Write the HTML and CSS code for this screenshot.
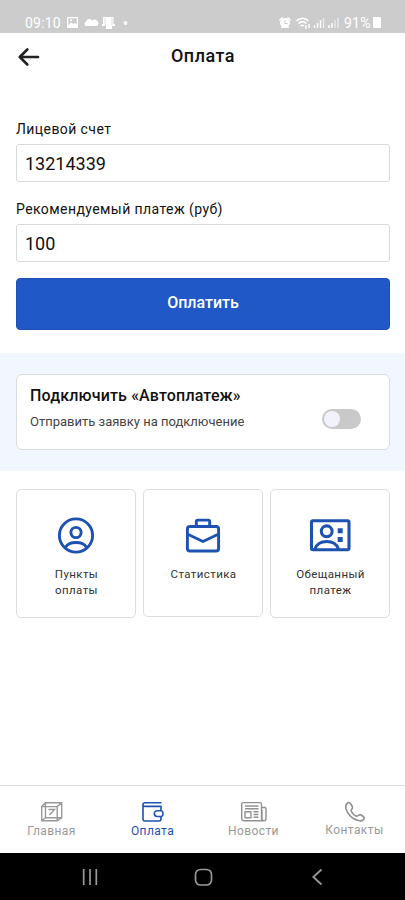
FILE: index.html
```html
<!DOCTYPE html>
<html lang="ru">
<head>
<meta charset="utf-8">
<meta name="viewport" content="width=device-width, initial-scale=1">
<title>Оплата</title>
<link rel="stylesheet" href="styles.css">
</head>
<body>
<div class="app">
  <div class="status">
    <span class="time">09:10</span>
    <svg class="status-left" width="64" height="16" viewBox="0 0 64 16" fill="#fff">
      <path fill-rule="evenodd" d="M2 2h9q1 0 1 1v9q0 1-1 1H2q-1 0-1-1V3q0-1 1-1zM2.300 3.300v7l3-3 2 2 1.500-1.500 2 2V3.300zM4 4.500h2v1.500H4z"/>
      <path d="M20 11a2.500 2.500 0 0 1 0-4.600 3.500 3.500 0 0 1 6.300-.8A3.200 3.200 0 0 1 31 11z"/>
      <path d="M37 2h10.500v8H46v4h-6v-4h-3zM36 9h3v2h-3zM46 9h3v2h-3z"/>
      <path d="M39 3v7M46 3v7" stroke="#ccc" stroke-width=".7"/>
      <circle cx="59.500" cy="8" r="1.900"/>
    </svg>
    <svg class="status-right" width="64" height="16" viewBox="0 0 64 16" fill="none" stroke="#fff">
      <circle cx="7" cy="8" r="4.500" fill="#fff"/>
      <path d="M1.500 5.500l3-3M12.500 5.500l-3-3M3.500 13l1-1.500M10.500 13l-1-1.500" stroke-width="1.600"/>
      <path d="M7 5v3.500h2.500" stroke="#ccc"/>
      <path d="M18.500 6q6-5.500 12 0M20.500 8.500q4-3.700 8 0M22.500 11q2-1.500 3.500 0" stroke-width="1.500"/>
      <path d="M28 10v4M31 9v4" stroke-width="1.400"/>
      <path d="M36.500 13v-3M39.500 13V8M42.500 13V5M51 13v-3M54 13V8" stroke-width="1.400"/>
      <path d="M45.500 13V3M57 13V5M60 13V3" stroke-width="1.200" opacity=".65"/>
    </svg>
    <span class="percent">91%</span>
    <span class="battery"></span>
  </div>

  <header class="header">
    <svg class="back" width="22" height="18" viewBox="0 0 22 18" fill="none" stroke="#222" stroke-width="2.600" stroke-linecap="round" stroke-linejoin="round"><path d="M20 9H2M9.300 1.500L1.800 9l7.500 7.500"/></svg>
    <h1 class="title">Оплата</h1>
  </header>

  <main class="main">
    <section class="form">
      <div class="label label-account">Лицевой счет</div>
      <div class="field">13214339</div>
      <div class="label label-sum">Рекомендуемый платеж (руб)</div>
      <div class="field">100</div>
      <div class="pay">Оплатить</div>
    </section>

    <section class="auto">
      <div class="auto-card">
        <div>
          <div class="auto-title">Подключить «Автоплатеж»</div>
          <div class="auto-text">Отправить заявку на подключение</div>
        </div>
        <div class="switch"><span class="knob"></span></div>
      </div>
    </section>

    <section class="tiles">
      <div class="tile">
        <svg width="42" height="38" viewBox="0 0 42 38" fill="none" stroke="#1d52b0" stroke-width="2.900"><circle cx="21" cy="19.500" r="16.600"/><circle cx="21" cy="16.500" r="5.100"/><path d="M10.500 31.500q2.500-5 10.500-5t10.500 5"/></svg>
        <div class="tile-text">Пункты<br>оплаты</div>
      </div>
      <div class="tile tile-middle">
        <svg width="42" height="38" viewBox="0 0 42 38" fill="none" stroke="#1d52b0" stroke-width="2.900" stroke-linejoin="round"><rect x="5.400" y="10.500" width="31.200" height="24.500" rx="2.500"/><path d="M14.300 10V5.600q0-1.500 1.500-1.500h10.400q1.500 0 1.500 1.500V10M5.800 18.300L21 25.500l15.200-7.200"/></svg>
        <div class="tile-text">Статистика</div>
      </div>
      <div class="tile">
        <svg width="42" height="38" viewBox="0 0 42 38" fill="none" stroke="#1d52b0" stroke-width="3.100"><rect x="2.500" y="4.800" width="37.500" height="29" rx="1.500"/><circle cx="17.700" cy="15.300" r="5.400"/><path d="M6 33q2.500-7.500 11.700-7.500T29.400 33"/><path d="M28.700 12.200h5v5h-5zM28.700 20.900h5v5h-5z" fill="#1d52b0" stroke="none"/></svg>
        <div class="tile-text">Обещанный<br>платеж</div>
      </div>
    </section>
  </main>

  <nav class="tabs">
    <div class="tab">
      <svg width="26" height="22" viewBox="0 0 26 22" fill="none" stroke="#999" stroke-width="1.400"><path d="M6.500 1.700h16.200v15H6.500zM2.700 5.600h15.500v14.200H2.700zM2.700 5.600l3.800-3.900M18.200 5.600l4.500-3.900M18.200 19.800l4.500-3.100M2.700 19.800l3.800-3.100M9.500 8.500h6l-5 5.500"/></svg>
      <span>Главная</span>
    </div>
    <div class="tab tab-active">
      <svg width="26" height="22" viewBox="0 0 26 22" fill="none" stroke="#1d52b0" stroke-width="1.600" stroke-linejoin="round"><path d="M21.500 1.700H5q-2 0-2 2V18q0 2 2 2h14q2 0 2-2v-2.500M3 4.200q.5 1.200 2 1.200h16v4.100"/><path d="M21.500 9.700h-4.300a2.900 2.900 0 1 0 0 5.800h4.300q1.500-.5 1.500-2.900t-1.500-2.900z"/></svg>
      <span>Оплата</span>
    </div>
    <div class="tab">
      <svg width="28" height="22" viewBox="0 0 28 22" fill="none" stroke="#919191" stroke-width="1.400" stroke-linejoin="round"><path d="M1.700 3q0-1.400 1.400-1.400h17q1.400 0 1.400 1.400v14.500q0 2.200 2.200 2.200H4q-2.300 0-2.300-2.300zM21.500 6.500h3.300q1.200 0 1.200 1.200v9.700q0 2.300-2.300 2.300-1.700 0-1.700-2.200V9M5 5h13.500M5 7.700h13.500M13.500 10.700h5M13.500 13.500h5M13.500 16.300h5M5 10.700h6v6H5z"/></svg>
      <span>Новости</span>
    </div>
    <div class="tab tab-contacts">
      <svg width="26" height="22" viewBox="0 0 26 22" fill="none" stroke="#919191" stroke-width="1.600" stroke-linejoin="round"><path d="M5.200 2.400q1.700-1.700 3.100.1l1.900 2.800q.9 1.500-.3 2.700-1.400 1.100-.5 2.700 1.500 2.800 4.600 4.200 1.400.6 2.500-.6 1.200-1.100 2.700-.3l2 1.500q1.900 1.400.3 3.100-2 1.900-5 1C10.500 18 5.700 13.500 3.900 7.500q-.8-3 1.300-5.100z"/></svg>
      <span>Контакты</span>
    </div>
  </nav>

  <div class="system">
    <svg width="20" height="20" viewBox="0 0 20 20" fill="none" stroke="#999" stroke-width="1.700"><path d="M3.700 2v16M10 2v16M16.300 2v16"/></svg>
    <svg width="20" height="20" viewBox="0 0 20 20" fill="none" stroke="#999" stroke-width="1.700"><rect x="1.500" y="2.500" width="16" height="15.500" rx="5"/></svg>
    <svg width="20" height="20" viewBox="0 0 20 20" fill="none" stroke="#999" stroke-width="1.800"><path d="M14.500 2.500L6.300 10l8.200 7.500"/></svg>
  </div>
</div>
</body>
</html>
```
FILE: styles.css
```css
* { box-sizing: border-box; }

body {
  margin: 0;
  background: #fff;
  color: #111;
  font-family: Roboto, "Liberation Sans", sans-serif;
}

.app {
  height: 900px;
  display: flex;
  flex-direction: column;
  overflow: hidden;
}

.status {
  height: 33px;
  flex: none;
  padding: 13px 24px 0 25px;
  display: flex;
  background: #ccc;
  color: #fff;
  font-size: 14px;
  line-height: 20px;
}
.time { width: 41px; letter-spacing: .2px; }
.status-left { margin-top: 2px; }
.status-right { margin: 2px 2px 0 auto; }
.percent { width: 28px; white-space: nowrap; letter-spacing: .2px; }
.battery { width: 8px; height: 11px; margin: 4px 0 0 1px; background: #fff; border-radius: 1px; }

.header {
  height: 47px;
  flex: none;
  padding: 0 18px;
  display: grid;
  grid-template-columns: 22px 1fr 22px;
  align-items: center;
}
.title {
  margin: 0;
  padding: 0 0 2px 1px;
  font-size: 18px;
  font-weight: 500;
  letter-spacing: .5px;
  text-align: center;
}

.main { flex: 1; }
.form { height: 273px; padding: 39px 15px 0 16px; }
.label { font-size: 14px; line-height: 20px; letter-spacing: .42px; white-space: nowrap; }
.label-account { margin-bottom: 5px; }
.label-sum { margin: 17px 0 5px; }
.field {
  height: 38px;
  padding-left: 8px;
  border: 1px solid #d9d9d9;
  border-radius: 3px;
  font-size: 18px;
  line-height: 37px;
}
.pay {
  height: 52px;
  margin-top: 16px;
  border: 1px solid #1d4fb4;
  border-radius: 4px;
  background: #2158c8;
  color: #fff;
  font-size: 16px;
  font-weight: 500;
  line-height: 48px;
  text-align: center;
}

.auto { height: 118px; padding: 21px 15px 21px 16px; background: #f2f6fe; }
.auto-card {
  height: 76px;
  padding: 10px 28px 0 13px;
  display: flex;
  justify-content: space-between;
  border: 1px solid #d9dcde;
  border-radius: 6px;
  background: #fff;
}
.auto-title { font-size: 16px; font-weight: 500; line-height: 22px; letter-spacing: .16px; white-space: nowrap; }
.auto-text { margin-top: 4px; color: #444; font-size: 13px; line-height: 21px; white-space: nowrap; }
.switch { width: 39px; height: 20px; margin-top: 24px; padding: 2px; border-radius: 10px; background: #c9c9c9; }
.knob { display: block; width: 16px; height: 16px; border-radius: 50%; background: #f2f3fa; }

.tiles {
  padding: 18px 15px 0 16px;
  display: grid;
  grid-template-columns: repeat(3, 1fr);
  gap: 7px;
}
.tile {
  height: 129px;
  padding-top: 26px;
  border: 1px solid #dedede;
  border-radius: 5px;
  text-align: center;
}
.tile-middle { height: 128px; }
.tile svg { display: block; margin: 0 auto; }
.tile-text { margin-top: 12px; padding-left: 1px; color: #333; font-size: 11.500px; line-height: 16px; letter-spacing: .4px; }

.tabs {
  height: 68px;
  flex: none;
  padding: 15px 0 0 1px;
  display: grid;
  grid-template-columns: repeat(4, 1fr);
  border-top: 1px solid #ddd;
  color: #999;
  font-size: 12px;
  line-height: 17px;
  letter-spacing: .4px;
}
.tab { display: flex; flex-direction: column; align-items: center; }
.tab-active { color: #1d52b0; }
.tab-contacts span { margin-top: -1px; }

.system {
  height: 47px;
  flex: none;
  padding: 0 78px 0 80px;
  display: flex;
  align-items: center;
  justify-content: space-between;
  background: #000;
}
```
